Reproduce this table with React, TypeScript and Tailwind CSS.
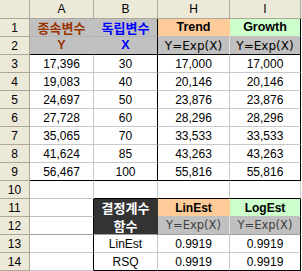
import React from "react";

const LIB = "font-['Liberation_Sans','Noto_Sans_CJK_KR',sans-serif]";
const DJV = "font-['DejaVu_Sans','Noto_Sans_CJK_KR',sans-serif]";
const KR = "font-['Noto_Sans_CJK_KR',sans-serif]";

type C = { t?: React.ReactNode; cls: string };

const data = [
  ["17,396", "30", "17,000", "17,000"],
  ["19,083", "40", "20,146", "20,146"],
  ["24,697", "50", "23,876", "23,876"],
  ["27,728", "60", "28,296", "28,296"],
  ["35,065", "70", "33,533", "33,533"],
  ["41,624", "85", "43,263", "43,263"],
  ["56,467", "100", "55,816", "55,816"],
];

function rightCls(r: number, c: number): string {
  if (c === 0) {
    if (r >= 11) return "border-r-black";
    if (r <= 2) return "border-r-[#c0c0c0]";
    return "border-r-[#c8c8c8]";
  }
  if (c === 1) {
    if (r <= 9) return "border-r-black";
    if (r === 11 || r === 12) return "border-r-[#333333]";
    return "border-r-[#c8c8c8]";
  }
  if (c === 2) {
    if (r === 1 || r === 11) return "border-r-[#ffcc99]";
    if (r === 2 || r === 12) return "border-r-[#e2e2e2]";
    return "border-r-[#c8c8c8]";
  }
  if (r === 10) return "border-r-[#c8c8c8]";
  return "border-r-black";
}

function bottomCls(r: number, c: number): string {
  if (r === 2 || r === 9) return "border-b-black";
  if ((r === 10 || r === 14) && c >= 1) return "border-b-black";
  if (r === 1) return c <= 1 ? "border-b-[#b4b4b4]" : "border-b-[#c0c0c0]";
  if (r === 11) return "border-b-[#c0c0c0]";
  if (r === 12) return "border-b-[#a0a0a0]";
  return "border-b-[#c8c8c8]";
}

function rowCells(r: number): (C | null)[] {
  if (r === 1)
    return [
      { t: "종속변수", cls: `bg-[#c0c0c0] text-[#993300] ${KR} text-[13px] font-semibold` },
      { t: "독립변수", cls: `bg-[#c0c0c0] text-[#0000ff] ${KR} text-[13px] font-semibold` },
      { t: "Trend", cls: `bg-[#ffcc99] text-black ${LIB} text-[12.5px] font-bold` },
      { t: "Growth", cls: `bg-[#ccffcc] text-black ${LIB} text-[12.5px] font-bold` },
    ];
  if (r === 2)
    return [
      { t: "Y", cls: `bg-[#c0c0c0] text-[#993300] ${LIB} text-[12.5px] font-bold` },
      { t: "X", cls: `bg-[#c0c0c0] text-[#0000ff] ${LIB} text-[12.5px] font-bold` },
      { t: "Y=Exp(X)", cls: `bg-[#c0c0c0] text-black ${DJV} text-[12px]` },
      { t: "Y=Exp(X)", cls: `bg-[#c0c0c0] text-black ${DJV} text-[12px]` },
    ];
  if (r >= 3 && r <= 9)
    return data[r - 3].map((v) => ({ t: v, cls: `bg-white text-black ${LIB} text-[12px]` }));
  if (r === 10)
    return [0, 1, 2, 3].map(() => ({ cls: "bg-white" }));
  if (r === 11)
    return [
      { cls: "bg-white" },
      {
        t: (
          <div className="flex flex-col">
            <div className="h-[18px] flex items-center justify-center">결정계수</div>
            <div className="h-[18px] flex items-center justify-center">함수</div>
          </div>
        ),
        cls: `row-span-2 bg-[#333333] text-white ${KR} text-[13px] font-bold`,
      },
      { t: "LinEst", cls: `bg-[#ffcc99] text-black ${LIB} text-[12px] font-bold` },
      { t: "LogEst", cls: `bg-[#ccffcc] text-black ${LIB} text-[12px] font-bold` },
    ];
  if (r === 12)
    return [
      { cls: "bg-white" },
      null,
      { t: "Y=Exp(X)", cls: `bg-[#c0c0c0] text-[#404040] ${DJV} text-[11.5px]` },
      { t: "Y=Exp(X)", cls: `bg-[#c0c0c0] text-[#404040] ${DJV} text-[11.5px]` },
    ];
  const label = r === 13 ? "LinEst" : "RSQ";
  return [
    { cls: "bg-white" },
    { t: label, cls: `bg-white text-black ${LIB} text-[12px]` },
    { t: "0.9919", cls: `bg-white text-black ${LIB} text-[12px]` },
    { t: "0.9919", cls: `bg-white text-black ${LIB} text-[12px]` },
  ];
}

const HDR = `bg-[#ece9d8] text-black ${LIB} text-[12px] flex items-center justify-center border-r border-b border-r-[#aca899] border-b-[#aca899]`;

export default function App() {
  const rows = Array.from({ length: 14 }, (_, i) => i + 1);
  return (
    <div className="w-[302px] h-[271px] bg-white overflow-hidden">
      <div className="grid grid-cols-[30px_64px_64px_72px_71px_1px] grid-rows-[19px_repeat(14,18px)] leading-none">
        <div className={HDR}></div>
        <div className={HDR}>A</div>
        <div className={HDR}>B</div>
        <div className={HDR}>H</div>
        <div className={`${HDR} font-['Liberation_Mono',monospace]`}>I</div>
        <div className="bg-[#ece9d8] border-b border-b-[#aca899]"></div>
        {rows.map((r) => (
          <React.Fragment key={r}>
            <div className={HDR}>{r}</div>
            {rowCells(r).map((c, ci) =>
              c === null ? null : (
                <div
                  key={ci}
                  className={`flex items-center justify-center whitespace-nowrap overflow-hidden border-r border-b ${rightCls(r, ci)} ${
                    c.cls.includes("row-span-2") ? "border-b-[#a0a0a0]" : bottomCls(r, ci)
                  } ${c.cls}`}
                >
                  {c.t}
                </div>
              )
            )}
            <div className="bg-white"></div>
          </React.Fragment>
        ))}
      </div>
    </div>
  );
}
